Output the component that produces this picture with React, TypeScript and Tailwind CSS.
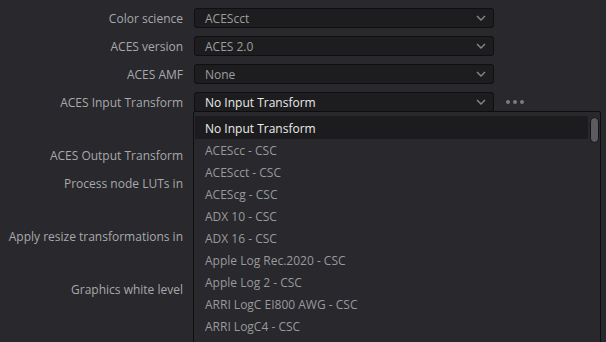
import React from 'react';

const fields = [
  { label: 'Color science', value: 'ACEScct' },
  { label: 'ACES version', value: 'ACES 2.0' },
  { label: 'ACES AMF', value: 'None' },
  { label: 'ACES Input Transform', value: 'No Input Transform', active: true },
];

const options = [
  'No Input Transform',
  'ACEScc - CSC',
  'ACEScct - CSC',
  'ACEScg - CSC',
  'ADX 10 - CSC',
  'ADX 16 - CSC',
  'Apple Log Rec.2020 - CSC',
  'Apple Log 2 - CSC',
  'ARRI LogC EI800 AWG - CSC',
  'ARRI LogC4 - CSC',
];

const Chevron = () => (
  <svg width="10" height="6" viewBox="0 0 10 6" fill="none" className="text-[#8a8a8e]">
    <path d="M1 1l4 4 4-4" stroke="currentColor" strokeWidth="1.3" />
  </svg>
);

const Dots = () => (
  <div className="flex gap-[3px] ml-3">
    <span className="w-1 h-1 rounded-full bg-[#7c7c80]" />
    <span className="w-1 h-1 rounded-full bg-[#7c7c80]" />
    <span className="w-1 h-1 rounded-full bg-[#7c7c80]" />
  </div>
);

const Label = ({ children }: { children: React.ReactNode }) => (
  <div className="w-[183px] text-right text-[#a9a9ab] shrink-0 pt-[2px]">{children}</div>
);

export default function App() {
  return (
    <div
      className="relative w-[606px] h-[342px] overflow-hidden bg-[#28282d] text-[12px] leading-none"
      style={{ fontFamily: '"Open Sans", "Noto Sans", sans-serif' }}
    >
      <div className="flex flex-col pt-2 gap-2">
        {fields.map((f) => (
          <div key={f.label} className="flex items-center h-5">
            <Label>{f.label}</Label>
            <div className="ml-[11px] w-[300px] h-5 flex items-center justify-between pl-[10px] pr-[7px] rounded-[3px] bg-[#1d1d1f] border border-[#0f0f10]">
              <span className={'pt-[2px] ' + (f.active ? 'text-[#eaeaea]' : 'text-[#9d9d9f]')}>{f.value}</span>
              <Chevron />
            </div>
            {f.active && <Dots />}
          </div>
        ))}
      </div>

      <div className="flex flex-col mt-[33px]">
        <div className="flex items-center h-5">
          <Label>ACES Output Transform</Label>
        </div>
        <div className="flex items-center h-5 mt-2">
          <Label>Process node LUTs in</Label>
        </div>
        <div className="flex items-center h-5 mt-[33px]">
          <Label>Apply resize transformations in</Label>
        </div>
        <div className="flex items-center h-5 mt-[33px]">
          <Label>Graphics white level</Label>
        </div>
      </div>

      <div className="absolute left-[193px] top-[111px] w-[408px] h-[260px] bg-[#28282d] border border-[#0e0e0f] rounded-[2px] flex">
        <div className="flex-1 flex flex-col pt-[4px] pl-[1px]">
          {options.map((o, i) => (
            <div
              key={o}
              className={
                'flex items-center pl-[10px] pt-[2px] ' +
                (i === 0 ? 'bg-[#1c1c1e] text-[#ececec] h-[23px]' : 'h-[22px] text-[#9a9a9c]')
              }
            >
              {o}
            </div>
          ))}
        </div>
        <div className="w-[12px] pt-[5px] flex justify-center">
          <div className="w-[9px] h-[26px] rounded-full bg-[#5b5b61] border border-[#141416]" />
        </div>
      </div>
    </div>
  );
}
